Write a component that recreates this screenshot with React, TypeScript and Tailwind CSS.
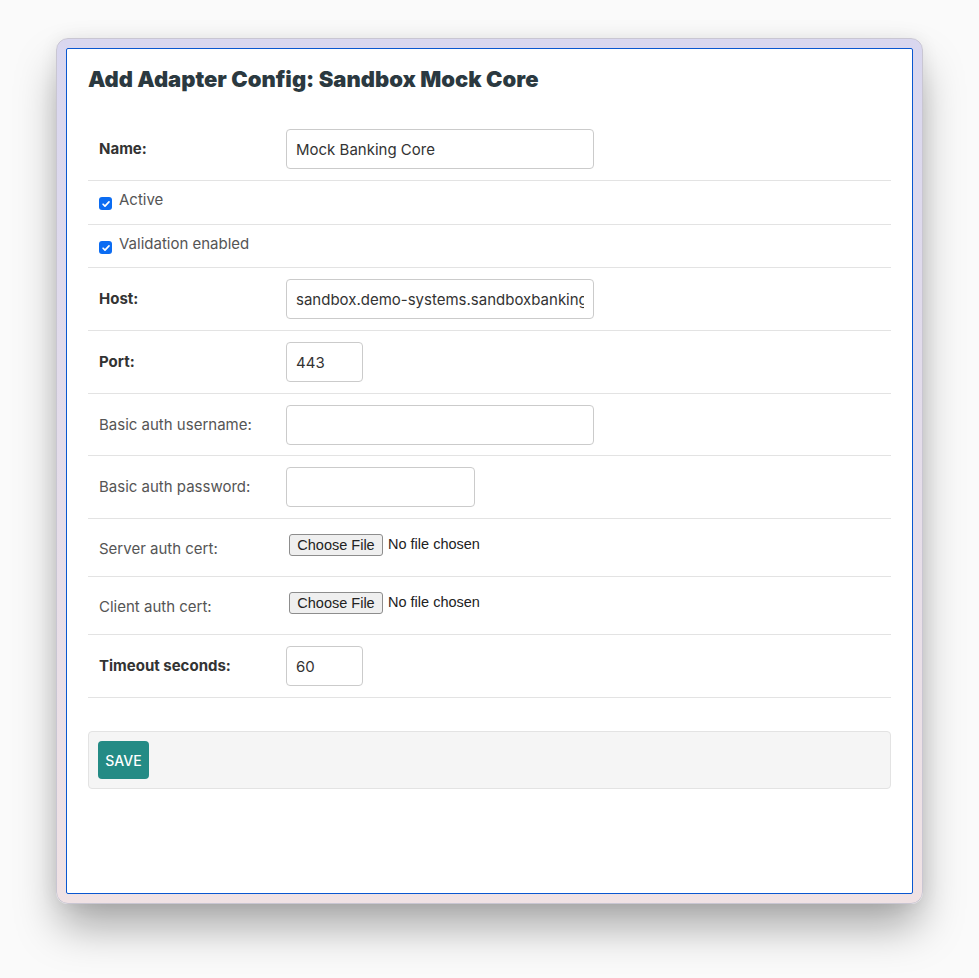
const sans = "font-['Inter','Liberation_Sans',Arial,sans-serif]";

function Check() {
    return (
        <span className="mt-[7px] mr-[7px] flex h-[13px] w-[13px] shrink-0 items-center justify-center rounded-[3px] bg-[#0b6cf2]">
            <svg viewBox="0 0 12 12" className="h-[10px] w-[10px]" fill="none" stroke="white" strokeWidth="2" strokeLinecap="round" strokeLinejoin="round">
                <path d="M2.5 6.3l2.3 2.3L9.6 3.4" />
            </svg>
        </span>
    );
}

function FileInput() {
    return (
        <div className="mt-[15px] ml-[3px] flex items-center self-start font-['Liberation_Sans',Arial,sans-serif] text-[14.5px] text-[#222]">
            <span className="flex h-[22px] w-[94px] items-center justify-center rounded-[3px] border border-[#8d8d8d] bg-[#efefef] leading-none">
                Choose File
            </span>
            <span className="ml-[5px]">No file chosen</span>
        </div>
    );
}

const inputCls = `h-[40px] rounded-[4px] border border-[#cbcbcb] bg-white px-[9px] text-[15px] text-[#333] outline-none ${sans}`;

function Row({ label, bold, tight, children }: { label: string; bold?: boolean; tight?: boolean; children: React.ReactNode }) {
    return (
        <div className={`flex items-center border-b border-[#e3e3e3] pt-[11px] ${tight ? 'pb-[10px]' : 'pb-[11px]'}`}>
            <div className={`w-[198px] shrink-0 pl-[11px] text-[15px] ${bold ? 'font-bold text-[#333]' : 'text-[#555]'}`}>
                {label}
            </div>
            {children}
        </div>
    );
}

export default function App() {
    return (
        <div className={`h-[978px] w-[979px] overflow-hidden bg-[#fafafa] pt-[38px] pl-[56px] ${sans}`}>
            {/* window frame */}
            <div className="h-[866px] w-[867px] rounded-[12px] border border-[#c9c6d2] bg-gradient-to-b from-[#d9d7ef] to-[#f0e2e4] p-[9px] shadow-[0_26px_44px_-4px_rgba(0,0,0,0.34),0_0_18px_rgba(0,0,0,0.07)]">
                <div className="h-full w-full rounded-[2px] border border-[#0a57d0] bg-white pt-[18px] pr-[21px] pl-[21px]">
                    <h1 className="font-['Inter',sans-serif] text-[22px] leading-[25px] font-black text-[#2b3940]">
                        Add Adapter Config: Sandbox Mock Core
                    </h1>

                    <div className="mt-[26px]">
                        <Row label="Name:" bold>
                            <input readOnly value="Mock Banking Core" className={`${inputCls} w-[308px]`} />
                        </Row>

                        <div className="flex items-start border-b border-[#e3e3e3] pt-[9px] pb-[14px] pl-[11px] text-[15px] leading-[20px] text-[#555]">
                            <Check />
                            <span>Active</span>
                        </div>
                        <div className="flex items-start border-b border-[#e3e3e3] pt-[9px] pb-[13px] pl-[11px] text-[15px] leading-[20px] text-[#555]">
                            <Check />
                            <span>Validation enabled</span>
                        </div>

                        <Row label="Host:" bold>
                            <input readOnly value="sandbox.demo-systems.sandboxbanking.example.com" className={`${inputCls} w-[308px]`} />
                        </Row>
                        <Row label="Port:" bold>
                            <input readOnly value="443" className={`${inputCls} w-[77px]`} />
                        </Row>
                        <Row label="Basic auth username:" tight>
                            <input readOnly value="" className={`${inputCls} h-[39px] w-[308px]`} />
                        </Row>
                        <Row label="Basic auth password:">
                            <input readOnly type="password" value="" className={`${inputCls} w-[189px]`} />
                        </Row>

                        <div className="flex h-[58px] items-center border-b border-[#e3e3e3]">
                            <div className="w-[198px] shrink-0 pt-[3px] pl-[11px] text-[15px] text-[#555]">Server auth cert:</div>
                            <FileInput />
                        </div>
                        <div className="flex h-[58px] items-center border-b border-[#e3e3e3]">
                            <div className="w-[198px] shrink-0 pt-[3px] pl-[11px] text-[15px] text-[#555]">Client auth cert:</div>
                            <FileInput />
                        </div>

                        <Row label="Timeout seconds:" bold>
                            <input readOnly value="60" className={`${inputCls} w-[77px]`} />
                        </Row>
                    </div>

                    {/* submit bar */}
                    <div className="mt-[33px] rounded-[4px] border border-[#e3e3e3] bg-[#f5f5f5] p-[9px]">
                        <button className="flex h-[38px] w-[51px] items-center justify-center rounded-[4px] bg-[#248b85] text-[14px] font-medium text-white">
                            SAVE
                        </button>
                    </div>
                </div>
            </div>
        </div>
    );
}
